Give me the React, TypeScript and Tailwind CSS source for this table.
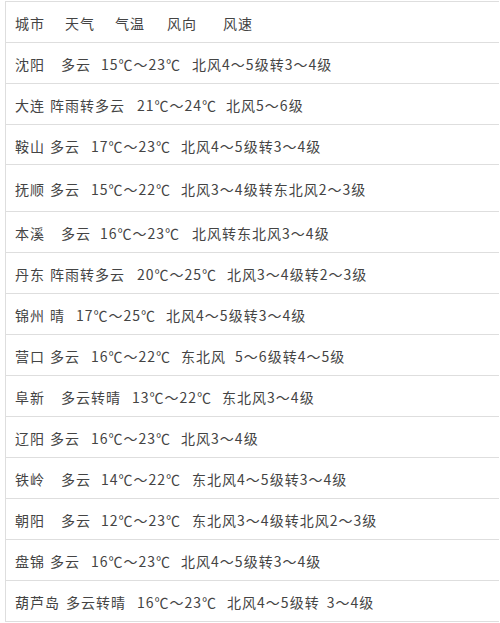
import React from 'react';

type Seg = {text: string; cls: string};
type RowData = {h: string; segs: Seg[]};

const rows: RowData[] = [
  {
    h: 'h-[41px]',
    segs: [
      {text: '城市', cls: ''},
      {text: '天气', cls: 'ml-[20px]'},
      {text: '气温', cls: 'ml-[20px]'},
      {text: '风向', cls: 'ml-[22px]'},
      {text: '风速', cls: 'ml-[26px]'},
    ],
  },
  {
    h: 'h-[41px]',
    segs: [
      {text: '沈阳', cls: ''},
      {text: '多云', cls: 'ml-[16px]'},
      {text: '15℃～23℃', cls: 'ml-[10px]'},
      {text: '北风4～5级转3～4级', cls: 'ml-[11px]'},
    ],
  },
  {
    h: 'h-[41px]',
    segs: [
      {text: '大连', cls: ''},
      {text: '阵雨转多云', cls: 'ml-[5px]'},
      {text: '21℃～24℃', cls: 'ml-[12px]'},
      {text: '北风5～6级', cls: 'ml-[9px]'},
    ],
  },
  {
    h: 'h-[40px]',
    segs: [
      {text: '鞍山', cls: ''},
      {text: '多云', cls: 'ml-[5px]'},
      {text: '17℃～23℃', cls: 'ml-[11px]'},
      {text: '北风4～5级转3～4级', cls: 'ml-[10px]'},
    ],
  },
  {
    h: 'h-[47px]',
    segs: [
      {text: '抚顺', cls: ''},
      {text: '多云', cls: 'ml-[5px]'},
      {text: '15℃～22℃', cls: 'ml-[11px]'},
      {text: '北风3～4级转东北风2～3级', cls: 'ml-[10px]'},
    ],
  },
  {
    h: 'h-[41px]',
    segs: [
      {text: '本溪', cls: ''},
      {text: '多云', cls: 'ml-[16px]'},
      {text: '16℃～23℃', cls: 'ml-[9px]'},
      {text: '北风转东北风3～4级', cls: 'ml-[12px]'},
    ],
  },
  {
    h: 'h-[41px]',
    segs: [
      {text: '丹东', cls: ''},
      {text: '阵雨转多云', cls: 'ml-[5px]'},
      {text: '20℃～25℃', cls: 'ml-[12px]'},
      {text: '北风3～4级转2～3级', cls: 'ml-[10px]'},
    ],
  },
  {
    h: 'h-[41px]',
    segs: [
      {text: '锦州', cls: ''},
      {text: '晴', cls: 'ml-[5px]'},
      {text: '17℃～25℃', cls: 'ml-[11px]'},
      {text: '北风4～5级转3～4级', cls: 'ml-[10px]'},
    ],
  },
  {
    h: 'h-[41px]',
    segs: [
      {text: '营口', cls: ''},
      {text: '多云', cls: 'ml-[5px]'},
      {text: '16℃～22℃', cls: 'ml-[11px]'},
      {text: '东北风', cls: 'ml-[10px]'},
      {text: '5～6级转4～5级', cls: 'ml-[9px]'},
    ],
  },
  {
    h: 'h-[41px]',
    segs: [
      {text: '阜新', cls: ''},
      {text: '多云转晴', cls: 'ml-[16px]'},
      {text: '13℃～22℃', cls: 'ml-[11px]'},
      {text: '东北风3～4级', cls: 'ml-[10px]'},
    ],
  },
  {
    h: 'h-[41px]',
    segs: [
      {text: '辽阳', cls: ''},
      {text: '多云', cls: 'ml-[5px]'},
      {text: '16℃～23℃', cls: 'ml-[11px]'},
      {text: '北风3～4级', cls: 'ml-[10px]'},
    ],
  },
  {
    h: 'h-[41px]',
    segs: [
      {text: '铁岭', cls: ''},
      {text: '多云', cls: 'ml-[16px]'},
      {text: '14℃～22℃', cls: 'ml-[10px]'},
      {text: '东北风4～5级转3～4级', cls: 'ml-[11px]'},
    ],
  },
  {
    h: 'h-[41px]',
    segs: [
      {text: '朝阳', cls: ''},
      {text: '多云', cls: 'ml-[16px]'},
      {text: '12℃～23℃', cls: 'ml-[10px]'},
      {text: '东北风3～4级转北风2～3级', cls: 'ml-[11px]'},
    ],
  },
  {
    h: 'h-[41px]',
    segs: [
      {text: '盘锦', cls: ''},
      {text: '多云', cls: 'ml-[5px]'},
      {text: '16℃～23℃', cls: 'ml-[11px]'},
      {text: '北风4～5级转3～4级', cls: 'ml-[10px]'},
    ],
  },
  {
    h: 'h-[41px]',
    segs: [
      {text: '葫芦岛', cls: ''},
      {text: '多云转晴', cls: 'ml-[6px]'},
      {text: '16℃～23℃', cls: 'ml-[11px]'},
      {text: '北风4～5级转', cls: 'ml-[10px]'},
      {text: '3～4级', cls: 'ml-[7px]'},
    ],
  },
];

const App = () => {
  return (
    <div className="min-h-[623px] w-[500px] bg-white pt-[1px]">
      <div
        className="ml-[5px] w-[494px] border-t border-l border-[#dedede] text-[14px] leading-none tracking-[1px] text-[#444]"
        style={{fontFamily: '"Noto Sans CJK SC", "Noto Sans", sans-serif'}}
      >
        {rows.map((row, i) => (
          <div
            key={i}
            className={`${row.h} flex items-center whitespace-nowrap border-b border-[#dedede] pl-[9px] pt-[2px]`}
          >
            {row.segs.map((s, j) => (
              <span key={j} className={s.cls}>
                {s.text}
              </span>
            ))}
          </div>
        ))}
      </div>
    </div>
  );
};

export default App;
